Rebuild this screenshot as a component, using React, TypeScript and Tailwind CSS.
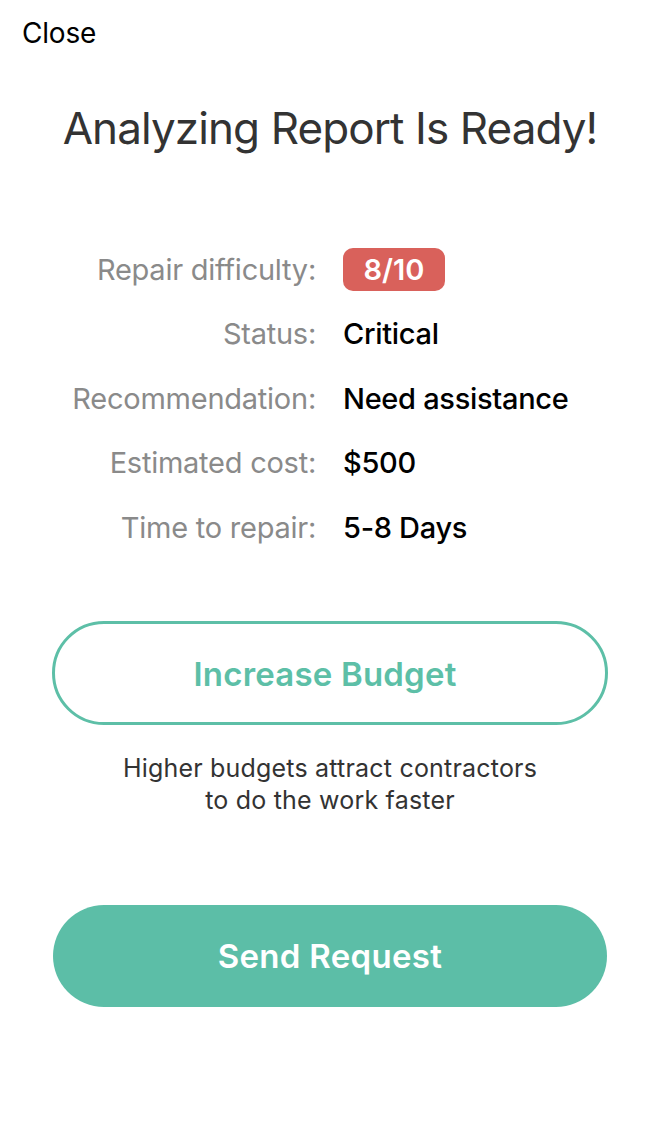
const rows: { label: string; value: string; badge?: boolean }[] = [
  { label: 'Repair difficulty:', value: '8/10', badge: true },
  { label: 'Status:', value: 'Critical' },
  { label: 'Recommendation:', value: 'Need assistance' },
  { label: 'Estimated cost:', value: '$500' },
  { label: 'Time to repair:', value: '5-8 Days' },
];

export default function App() {
  return (
    <div className="min-h-screen w-[660px] bg-white font-['Inter',sans-serif]">
      {/* Top bar */}
      <div className="flex h-[66px] items-center px-[22px]">
        <button className="text-[28px] tracking-[-0.2px] text-black">Close</button>
      </div>

      {/* Title */}
      <h1 className="mt-[34px] text-center text-[44px] leading-[56px] tracking-[-0.9px] text-[#333333]">
        Analyzing Report Is Ready!
      </h1>

      {/* Report details */}
      <div className="mt-[81px] grid grid-cols-[316px_1fr] gap-x-[27px]">
        {rows.map((row) => (
          <div key={row.label} className="contents">
            <div className="flex h-[64.5px] items-center justify-end text-[29px] tracking-[-0.25px] text-[#8a8a8a]">
              {row.label}
            </div>
            <div className="flex h-[64.5px] items-center">
              {row.badge ? (
                <span className="flex h-[43px] w-[102px] items-center justify-center rounded-[10px] bg-[#d9615b] text-[29px] font-semibold text-white">
                  {row.value}
                </span>
              ) : (
                <span className="text-[29px] font-medium tracking-[-0.3px] text-black">{row.value}</span>
              )}
            </div>
          </div>
        ))}
      </div>

      {/* Increase budget */}
      <button className="mx-auto mt-[61px] flex h-[104px] w-[556px] items-center justify-center rounded-full border-[3px] border-[#5dbfa7] pt-[4px] pr-[10px] text-[33px] font-semibold tracking-[0.2px] text-[#5dbfa7]">
        Increase Budget
      </button>
      <p className="mt-[27px] text-center text-[25px] leading-[32px] tracking-[0.2px] text-[#333333]">
        Higher budgets attract contractors
        <br />
        to do the work faster
      </p>

      {/* Send */}
      <button className="mx-auto mt-[89px] flex h-[102px] w-[554px] items-center justify-center rounded-full bg-[#5cbea7] pt-[2px] text-[33px] font-semibold tracking-[0.3px] text-white">
        Send Request
      </button>
    </div>
  );
}
